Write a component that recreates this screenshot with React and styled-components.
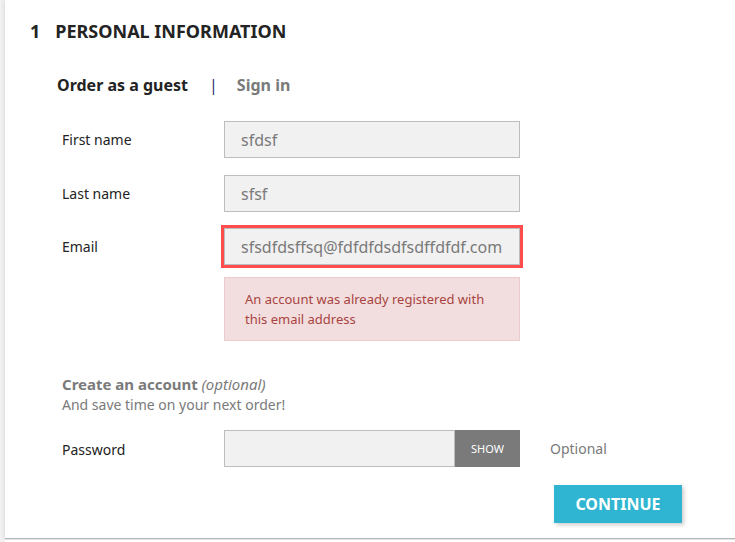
import React from "react";
import styled, { createGlobalStyle } from "styled-components";

const GlobalStyle = createGlobalStyle`
  html, body {
    margin: 0;
    padding: 0;
    background: #f1f1f1;
    font-family: "Noto Sans", "Open Sans", sans-serif;
    color: #232323;
  }
  * { box-sizing: border-box; }
`;

const Page = styled.div`
  padding-left: 5px;
  height: 542px;
  overflow: hidden;
`;

const Step = styled.section`
  background: #fff;
  padding: 19px 0 15px 25px;
  border-bottom: 1px solid #b8b8b8;
  box-shadow: -2px 0 3px rgba(0, 0, 0, 0.06);
`;

const NextStep = styled.section`
  background: #fff;
  height: 60px;
  border-top: 1px solid #e2e2e2;
`;

const StepTitle = styled.h1`
  margin: 0;
  font-size: 18px;
  line-height: 24px;
  font-weight: 700;
  text-transform: uppercase;
  color: #232323;
  display: flex;
  gap: 15px;
`;

const Content = styled.div`
  padding-left: 27px;
`;

const GuestNav = styled.nav`
  margin-top: 30px;
  display: flex;
  align-items: center;
  font-size: 16px;
  line-height: 24px;
  font-weight: 700;
`;

const NavItem = styled.span`
  color: ${p => (p.$active ? "#232323" : "#7a7a7a")};
`;

const NavSep = styled.span`
  font-weight: 400;
  color: #2e2e6e;
  margin: 0 19px 0 21px;
`;

const Form = styled.div`
  margin-top: 24px;
`;

const Row = styled.div`
  display: flex;
  align-items: center;
  margin-bottom: ${p => p.$gap ?? 17}px;
`;

const Label = styled.label`
  width: 167px;
  padding-left: 5px;
  padding-top: ${p => (p.$low ? 3 : 1)}px;
  font-size: 14px;
  line-height: 20px;
  color: #232323;
`;

const Field = styled.div`
  width: 296px;
`;

const Input = styled.div`
  height: 37px;
  background: #f1f1f1;
  border: 1px solid #bdbdbd;
  padding-left: 16px;
  display: flex;
  align-items: center;
  font-size: 16px;
  color: #7a7a7a;
  white-space: nowrap;
  outline: ${p => (p.$error ? "3px solid #ff4c4c" : "none")};
  flex: ${p => (p.$grow ? 1 : "none")};
`;

const Alert = styled.div`
  margin-top: 12px;
  background: #f2dede;
  border: 1px solid #ebcccc;
  color: #a94442;
  font-size: 13px;
  line-height: 20px;
  padding: 11px 20px 11px 20px;
`;

const Group = styled.div`
  display: flex;
`;

const ShowButton = styled.div`
  width: 65px;
  height: 37px;
  background: #7a7a7a;
  color: #fff;
  font-size: 11px;
  text-transform: uppercase;
  display: flex;
  align-items: center;
  justify-content: center;
`;

const Comment = styled.span`
  margin-left: 30px;
  font-size: 14px;
  color: #7a7a7a;
`;

const AccountNote = styled.div`
  margin: 33px 0 15px 5px;
  font-size: 14px;
  line-height: 20px;
  color: #7a7a7a;
  strong { font-weight: 700; font-size: 15px; }
  em { font-style: italic; font-size: 15px; }
`;

const Footer = styled.div`
  display: flex;
  justify-content: flex-end;
  padding-right: 53px;
  margin-top: 18px;
`;

const ContinueButton = styled.button`
  width: 128px;
  height: 38px;
  border: 0;
  background: #2fb5d2;
  color: #fff;
  font-family: inherit;
  font-size: 16px;
  font-weight: 700;
  text-transform: uppercase;
  box-shadow: 2px 2px 4px rgba(0, 0, 0, 0.2);
  cursor: pointer;
`;

export default function App() {
  return (
    <Page>
      <GlobalStyle />
      <Step>
        <StepTitle>
          <span>1</span>
          <span>Personal Information</span>
        </StepTitle>
        <Content>
          <GuestNav>
            <NavItem $active>Order as a guest</NavItem>
            <NavSep>|</NavSep>
            <NavItem>Sign in</NavItem>
          </GuestNav>

          <Form>
            <Row>
              <Label>First name</Label>
              <Field><Input>sfdsf</Input></Field>
            </Row>
            <Row $gap={16}>
              <Label>Last name</Label>
              <Field><Input>sfsf</Input></Field>
            </Row>
            <Row $gap={0}>
              <Label>Email</Label>
              <Field><Input $error>sfsdfdsffsq@fdfdfdsdfsdffdfdf.com</Input></Field>
            </Row>
            <Row $gap={0}>
              <Label />
              <Field>
                <Alert>An account was already registered with this email address</Alert>
              </Field>
            </Row>

            <AccountNote>
              <strong>Create an account</strong> <em>(optional)</em>
              <br />
              And save time on your next order!
            </AccountNote>

            <Row $gap={0}>
              <Label $low>Password</Label>
              <Field>
                <Group>
                  <Input $grow />
                  <ShowButton>Show</ShowButton>
                </Group>
              </Field>
              <Comment>Optional</Comment>
            </Row>

            <Footer>
              <ContinueButton>Continue</ContinueButton>
            </Footer>
          </Form>
        </Content>
      </Step>
      <NextStep />
    </Page>
  );
}
